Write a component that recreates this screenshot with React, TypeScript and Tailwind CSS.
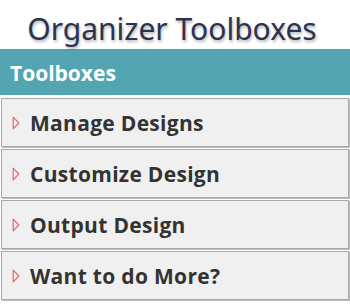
import React from "react";

const items = ["Manage Designs", "Customize Design", "Output Design", "Want to do More?"];

function Tri() {
  return (
    <svg width="8" height="14" viewBox="0 0 8 14" className="shrink-0">
      <path d="M1.2 1.2 L6.8 7 L1.2 12.8 Z" fill="none" stroke="#e0696b" strokeWidth="1.2" strokeLinejoin="round" />
    </svg>
  );
}

export default function App() {
  return (
    <div className="w-[350px] h-[304px] bg-white overflow-hidden" style={{ fontFamily: '"Open Sans", sans-serif' }}>
      <div className="h-[49px] flex items-center justify-center pr-[6px]">
        <span
          className="text-[30px] leading-none text-[#2c3350] pt-[8px]"
          style={{ fontFamily: '"Noto Sans", sans-serif', textShadow: "1px 2px 3px rgba(0,0,0,0.3)" }}
        >
          Organizer Toolboxes
        </span>
      </div>
      <div className="h-[46px] bg-[#53a6b1] flex items-center pl-[10px]">
        <span className="text-white font-bold text-[21px] leading-none pt-[3px]">Toolboxes</span>
      </div>
      <div className="h-[3px]" />
      <div className="flex flex-col gap-[2px] px-[1px]">
        {items.map((t) => (
          <div
            key={t}
            className="h-[49px] bg-[#f0f0f0] border border-[#a8a8a8] shadow-[1px_1px_0_#bdbdbd] flex items-center pl-[10px] gap-[10px]"
          >
            <Tri />
            <span className="text-[21px] font-bold text-[#333333] leading-none tracking-[0.3px] pt-[2px]">{t}</span>
          </div>
        ))}
      </div>
    </div>
  );
}
